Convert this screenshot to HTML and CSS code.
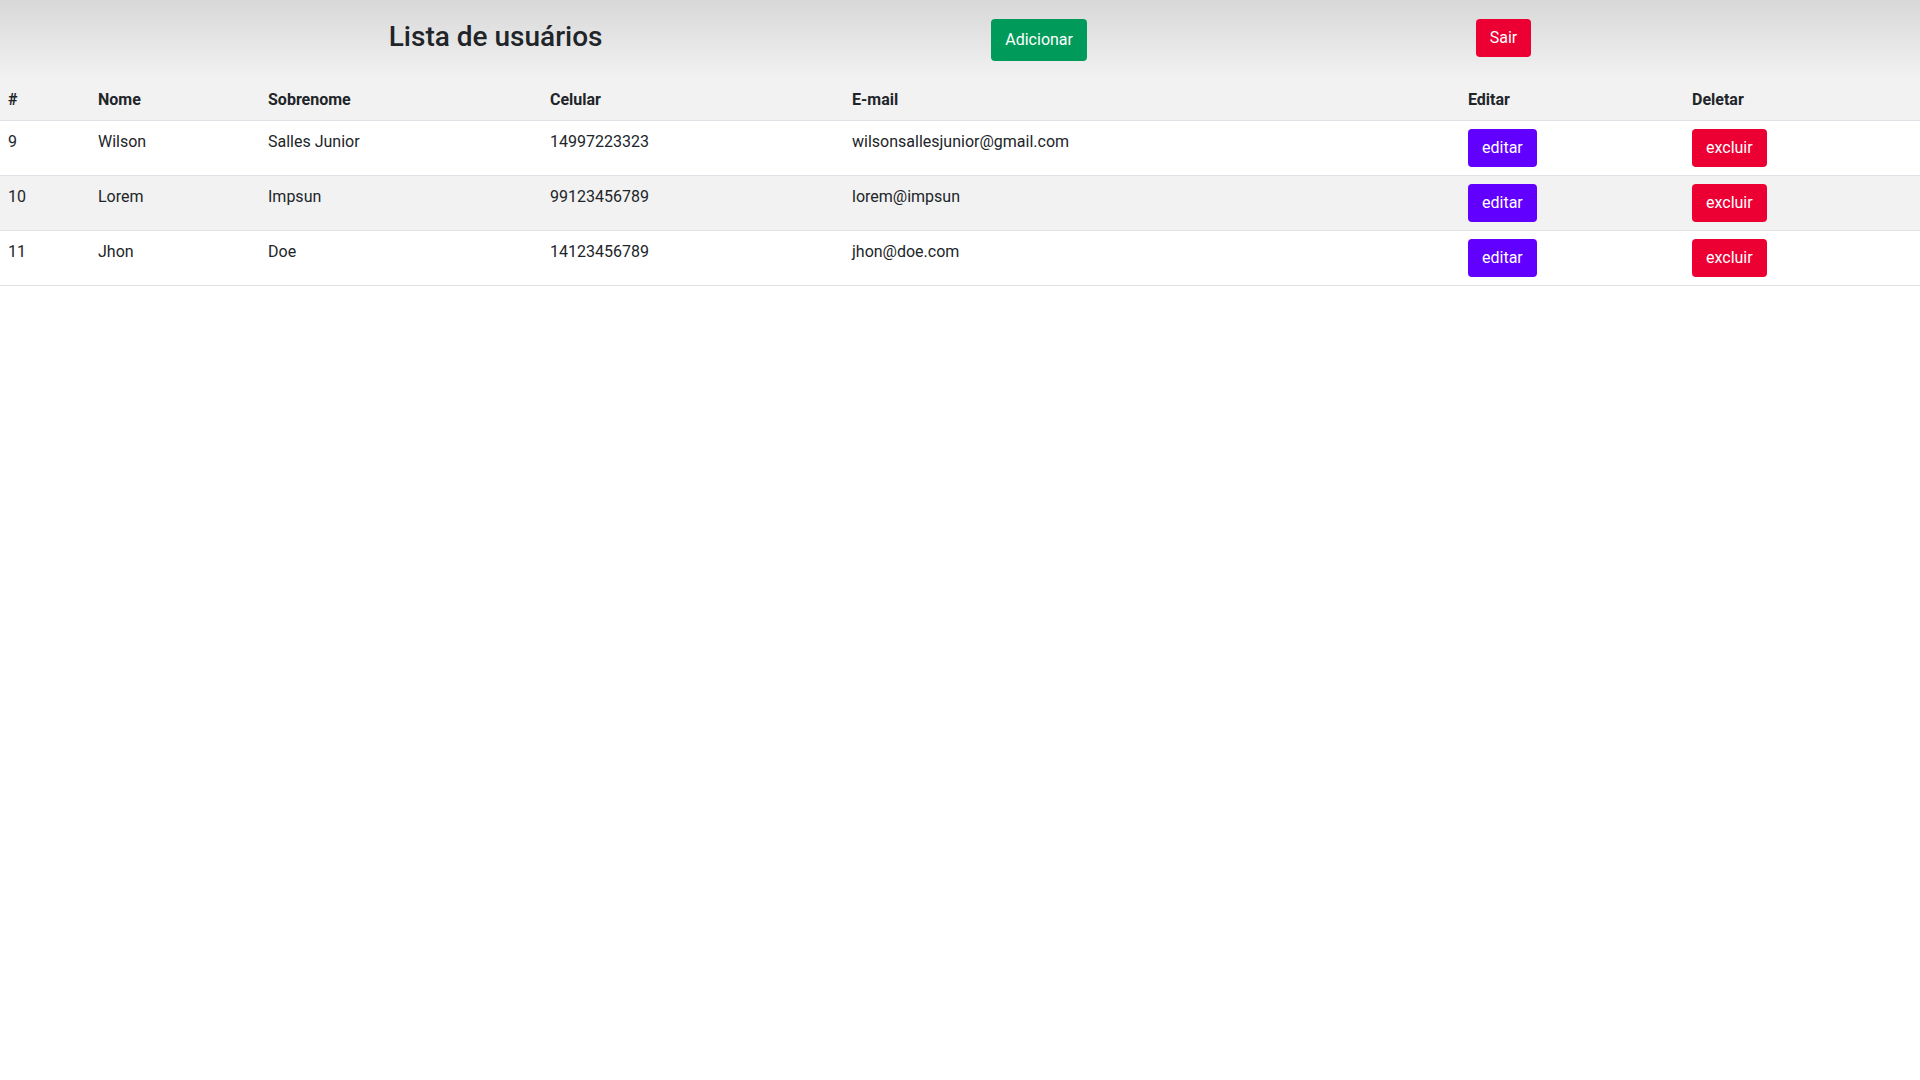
FILE: index.html
```html
<!DOCTYPE html>
<html lang="pt-BR">
<head>
<meta charset="utf-8">
<title>Lista de usuários</title>
<link rel="stylesheet" href="styles.css">
</head>
<body>
<header class="topbar">
  <h3 class="title">Lista de usuários</h3>
  <button class="btn btn-add">Adicionar</button>
  <button class="btn btn-red btn-exit">Sair</button>
</header>
<table class="users">
  <thead>
    <tr>
      <th class="c-id">#</th>
      <th class="c-name">Nome</th>
      <th class="c-last">Sobrenome</th>
      <th class="c-phone">Celular</th>
      <th class="c-mail">E-mail</th>
      <th class="c-edit">Editar</th>
      <th class="c-del">Deletar</th>
    </tr>
  </thead>
  <tbody>
    <tr>
      <td class="txt">9</td><td class="txt">Wilson</td><td class="txt">Salles Junior</td><td class="txt">14997223323</td><td class="txt">wilsonsallesjunior@gmail.com</td>
      <td><button class="btn btn-purple">editar</button></td>
      <td><button class="btn btn-red">excluir</button></td>
    </tr>
    <tr class="striped">
      <td class="txt">10</td><td class="txt">Lorem</td><td class="txt">Impsun</td><td class="txt">99123456789</td><td class="txt">lorem@impsun</td>
      <td><button class="btn btn-purple">editar</button></td>
      <td><button class="btn btn-red">excluir</button></td>
    </tr>
    <tr>
      <td class="txt">11</td><td class="txt">Jhon</td><td class="txt">Doe</td><td class="txt">14123456789</td><td class="txt">jhon@doe.com</td>
      <td><button class="btn btn-purple">editar</button></td>
      <td><button class="btn btn-red">excluir</button></td>
    </tr>
  </tbody>
</table>
</body>
</html>
```
FILE: styles.css
```css
* { box-sizing: border-box; }
html, body {
  margin: 0;
  padding: 0;
  background: #ffffff;
  font-family: Roboto, "Liberation Sans", sans-serif;
  font-size: 16px;
  line-height: 24px;
  color: #212529;
}
.topbar {
  height: 80px;
  display: flex;
  justify-content: space-evenly;
  align-items: flex-start;
  padding-top: 19px;
  background: linear-gradient(#d8d8d8, #f2f2f2);
}
.title {
  margin: 2px 0 0 0;
  font-size: 28px;
  line-height: 32px;
  font-weight: 500;
  color: #212529;
}
.btn {
  font-family: inherit;
  font-size: 16px;
  line-height: 24px;
  border: 1px solid transparent;
  border-radius: 4px;
  padding: 6px 13px;
  color: #ffffff;
  cursor: pointer;
}
.btn-add {
  background: #009b5a;
  padding: 8px 13px;
}
.btn-red { background: #ec0033; }
.btn-purple { background: #6200ff; }
.users {
  width: 100%;
  border-collapse: collapse;
}
.users th, .users td {
  text-align: left;
  vertical-align: top;
  padding: 8px;
  border-bottom: 1px solid #dee2e6;
}
.users td.txt { padding-top: 9px; }
.users th {
  font-weight: 700;
  background: #f2f2f2;
}
.users tr.striped td { background: #f2f2f2; }
.c-id { width: 90px; }
.c-name { width: 170px; }
.c-last { width: 282px; }
.c-phone { width: 302px; }
.c-mail { width: 616px; }
.c-edit { width: 224px; }
.c-del { width: 236px; }
```
